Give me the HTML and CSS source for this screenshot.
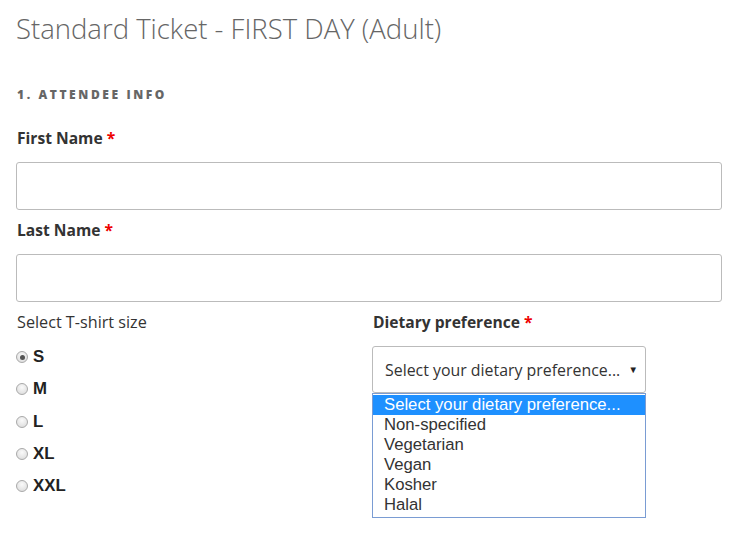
FILE: index.html
```html
<!DOCTYPE html>
<html>
<head>
<meta charset="utf-8">
<link rel="stylesheet" href="styles.css">
</head>
<body>
<div class="page">
  <h1 class="title">Standard Ticket - FIRST DAY (Adult)</h1>
  <h3 class="section">1. Attendee info</h3>
  <div class="field">
    <label class="label">First Name <span class="req">*</span></label>
    <div class="input"></div>
  </div>
  <div class="field">
    <label class="label">Last Name <span class="req">*</span></label>
    <div class="input"></div>
  </div>
  <div class="cols">
    <div class="col">
      <div class="plain">Select T-shirt size</div>
      <ul class="radios">
        <li><span class="radio checked"></span><span class="rlabel">S</span></li>
        <li><span class="radio"></span><span class="rlabel">M</span></li>
        <li><span class="radio"></span><span class="rlabel">L</span></li>
        <li><span class="radio"></span><span class="rlabel">XL</span></li>
        <li><span class="radio"></span><span class="rlabel">XXL</span></li>
      </ul>
    </div>
    <div class="col">
      <label class="label">Dietary preference <span class="req">*</span></label>
      <div class="selectwrap">
        <div class="select"><span class="seltext">Select your dietary preference...</span><span class="arrow">▼</span></div>
        <ul class="dropdown">
          <li class="active">Select your dietary preference...</li>
          <li>Non-specified</li>
          <li>Vegetarian</li>
          <li>Vegan</li>
          <li>Kosher</li>
          <li>Halal</li>
        </ul>
      </div>
    </div>
  </div>
</div>
</body>
</html>
```
FILE: styles.css
```css
html, body { margin: 0; padding: 0; background: #fff; }
body { font-family: "Open Sans", "Liberation Sans", sans-serif; color: #222; min-height: 544px; }
.page { padding: 0 16px 40px 16px; width: 706px; }
.title { margin: 0; padding-top: 11px; font-size: 27.5px; font-weight: 300; color: #666; line-height: 36px; letter-spacing: 0; }
.section { margin: 40px 0 0 1px; font-size: 12px; font-weight: 800; letter-spacing: 2.6px; text-transform: uppercase; color: #666; line-height: 16px; }
.field { margin-top: 25px; }
.field + .field { margin-top: 10px; }
.label { display: block; font-size: 15.6px; font-weight: 700; color: #333; line-height: 20px; margin-left: 1px; }
.req { color: #e00; }
.input { margin-top: 14px; height: 46px; border: 1px solid #bbb; border-radius: 3px; }
.cols { display: grid; grid-template-columns: 356px 1fr; margin-top: 10px; }
.plain { font-size: 16.2px; color: #333; line-height: 20px; margin-left: 1px; }
.radios { list-style: none; margin: 9px 0 0 0; padding: 0; }
.radios li { display: flex; align-items: center; height: 32.3px; margin-left: 0; }
.radio { width: 10px; height: 10px; border: 1px solid #a9a9a9; border-radius: 50%; background: radial-gradient(circle at 50% 35%, #fafafa, #d8d8d8); box-sizing: content-box; margin-right: 5px; position: relative; }
.radio.checked::after { content: ""; position: absolute; left: 2.5px; top: 2.5px; width: 5px; height: 5px; border-radius: 50%; background: #555; }
.rlabel { font-family: "Liberation Sans", Arial, sans-serif; font-size: 16.8px; font-weight: 700; color: #222; }
.selectwrap { position: relative; margin-top: 14px; width: 274px; }
.select { height: 45px; border: 1px solid #bbb; border-radius: 3px; display: flex; align-items: center; justify-content: space-between; padding: 0 7px 0 12px; font-size: 15.9px; color: #333; white-space: nowrap; }
.arrow { font-size: 9.5px; color: #222; }
.dropdown { position: absolute; left: 0; top: 47px; width: 272px; margin: 0; padding: 1px 0 2px; list-style: none; border: 1px solid #7a9cd3; background: #fff; font-family: "Liberation Sans", Arial, sans-serif; font-size: 16.7px; color: #333; }
.dropdown li { height: 20px; line-height: 20px; padding-left: 11px; }
.dropdown li.active { background: #1e90ff; color: #fff; }
```
